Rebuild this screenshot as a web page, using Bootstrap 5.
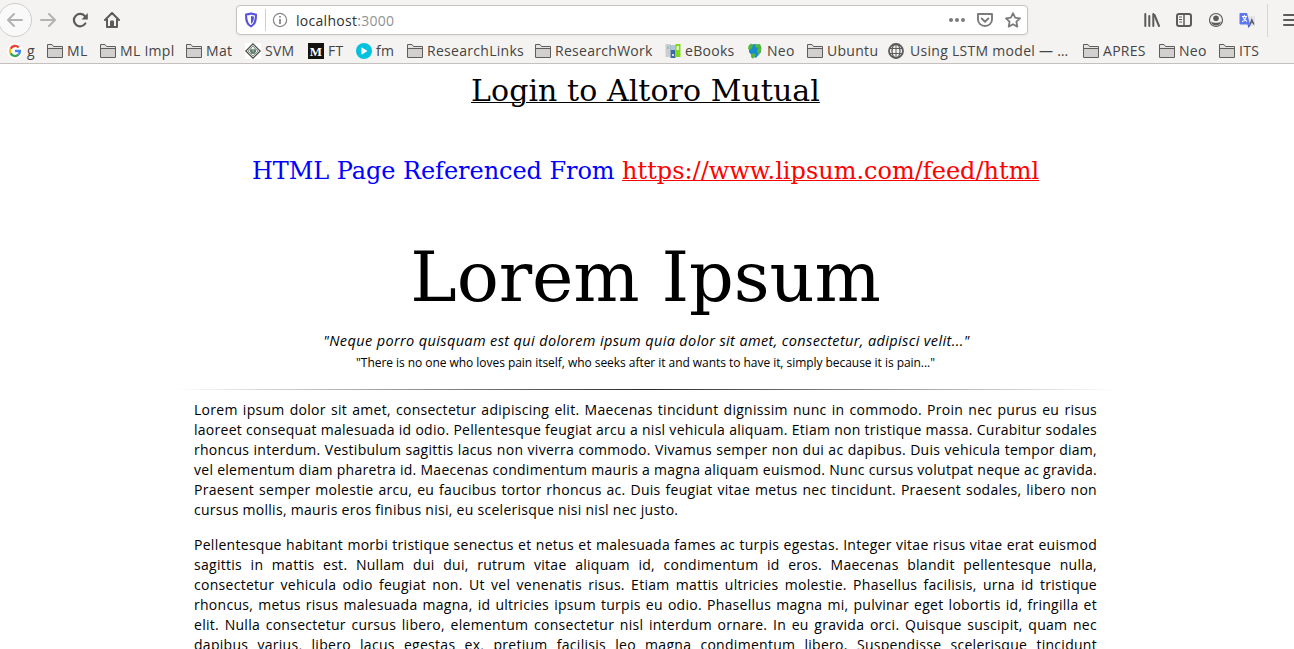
<!DOCTYPE html>
<html lang="en">
<head>
<meta charset="utf-8">
<title>Login to Altoro Mutual</title>
<meta name="viewport" content="width=device-width, initial-scale=1">
<link href="https://cdn.jsdelivr.net/npm/bootstrap@5.3.0/dist/css/bootstrap.min.css" rel="stylesheet">
<style>
body{height:649px;color:#000;background:#fff;font-family:"Open Sans",sans-serif;font-size:14px;line-height:20px}
svg{display:block;flex:none}
.chrome{height:64px;background:#f4f3f2;border-bottom:1px solid #c3c0bd;color:#4a4a4a;font-family:"Open Sans","Noto Sans",sans-serif}
.toolbar-row{height:40px}
.nav-icons{width:236px}
.back{width:34px;height:34px;margin-left:-2px;border:1px solid #cfcccb;border-radius:50%;background:#faf9f9}
.address{width:792px;height:30px;border:1px solid #c4c1be;border-radius:4px;background:#fff;box-shadow:0 1px 3px rgba(0,0,0,.05)}
.address .divider{width:1px;height:22px;background:#cfcfcf}
.address-text{font-size:14px;letter-spacing:.28px;color:#303030;padding-top:1px}
.address-text span{color:#919191}
.tool-divider{width:1px;height:33px;background:#d9d7d5}
.marks{display:grid;height:22px;padding-left:7px;grid-template-columns:40px 53px 86px 59px 63px 48px 51px 128px 130px 82px 60px 81px 195px 76px 60px 75px}
.marks a{display:flex;align-items:center;gap:4px;color:#444;text-decoration:none;white-space:nowrap;font-size:14px;line-height:20px;letter-spacing:.29px}
.marks span{margin-top:-1px}
.marks .wide-gap{gap:6px}
.serif{font-family:"DejaVu Serif",serif;font-weight:400;margin:0}
.login{font-size:30px;line-height:36px;padding-top:9px;letter-spacing:.06px;text-decoration:underline 1px}
.source{font-size:24px;line-height:28px;margin-top:48px;color:#00f;letter-spacing:-.06px}
.source a{color:red;text-decoration:underline 1px;letter-spacing:0}
.title{font-size:70px;line-height:90px;margin-top:47px;letter-spacing:-.15px}
.sheet{width:943px;margin-left:174px}
.quote{font-size:14.5px;font-style:italic;line-height:20px;margin-top:9px;padding-left:2px;letter-spacing:.37px}
.quote-en{font-size:12px;line-height:20px;margin-top:2px;letter-spacing:-.045px}
.rule{height:1px;margin:16px 0 10px;background:linear-gradient(to right,transparent,#2a2a2a 50%,transparent)}
.copy{padding:0 20px;letter-spacing:.28px}
.copy p{margin:0 0 15px}
.copy span{display:block;white-space:nowrap;text-align:justify;text-align-last:justify}
.copy .end{text-align-last:left}
</style>
</head>
<body class="overflow-hidden">
<svg width="0" height="0" class="position-absolute">
<symbol id="folder" viewBox="0 0 16 16"><path d="M.5 14.500V1.500h4.500l1.500 2h9v11z" fill="#e4e3e1" stroke="#5f5e5c"/><path d="M1 6h14v8H1z" fill="#d1d0ce"/><path d="M.5 5.500h15" stroke="#5f5e5c"/></symbol>
</svg>
<header class="chrome">
<div class="toolbar-row d-flex align-items-center">
<div class="nav-icons d-flex align-items-center">
<div class="back d-flex align-items-center justify-content-center"><svg width="16" height="16" fill="none" stroke="#b4b2b0" stroke-width="2" stroke-linecap="round" stroke-linejoin="round"><path d="M15 8H1.500M7 2L1 8l6 6"/></svg></div>
<svg class="ms-2" width="16" height="16" fill="none" stroke="#b4b2b0" stroke-width="2" stroke-linecap="round" stroke-linejoin="round"><path d="M1 8h13.500M9 2l6 6-6 6"/></svg>
<svg style="margin-left:16px" width="17" height="16" fill="none" stroke="#5c5b59" stroke-width="2.200" stroke-linecap="round"><path d="M13.300 11.500A6.200 6.200 0 1 1 13 4.300"/><path d="M15.800 1v6.500H9.500z" fill="#5c5b59" stroke="none"/></svg>
<svg style="margin-left:15px" width="16" height="16" fill="none" stroke="#5c5b59" stroke-width="2" stroke-linejoin="round" stroke-linecap="round"><path d="M1 8l7-7 7 7M3 7v8h10V7"/><path d="M6 14V9.500a1 1 0 0 1 1-1h2a1 1 0 0 1 1 1V14z" fill="#5c5b59" stroke="none"/></svg>
</div>
<div class="address d-flex align-items-center">
<svg style="margin-left:7px" width="14" height="16" fill="none"><path d="M7 1.500c2 .8 3.500.9 5 1 0 5.500-.5 9.500-5 12-4.500-2.500-5-6.500-5-12 1.500-.1 3-.2 5-1z" stroke="#5952dc" stroke-width="2" stroke-linejoin="round"/><path d="M7 4v8c2.300-1.500 2.900-4 3-7.400C8.800 4.500 8 4.300 7 4z" fill="#5952dc"/></svg>
<div class="divider" style="margin-left:7px"></div>
<svg style="margin-left:6px" width="16" height="16" fill="none"><circle cx="8" cy="8" r="6.600" stroke="#858585" stroke-width="1.200"/><path d="M8 7v5M8 4v1.600" stroke="#777" stroke-width="1.600"/></svg>
<div class="address-text" style="margin-left:8px">localhost<span>:3000</span></div>
<svg class="ms-auto" width="18" height="16" fill="#7b7b7b"><circle cx="3" cy="8" r="2"/><circle cx="9" cy="8" r="2"/><circle cx="15" cy="8" r="2"/></svg>
<svg style="margin-left:11px" width="16" height="16" fill="none" stroke="#7b7b7b" stroke-width="1.900" stroke-linecap="round" stroke-linejoin="round"><path d="M1 2h14v5.500a7 6.500 0 0 1-14 0z"/><path d="M4.700 6.500L8 9.700l3.300-3.200"/></svg>
<svg style="margin:0 6px 0 12px" width="16" height="16" fill="none" stroke="#7b7b7b" stroke-width="1.800" stroke-linejoin="round"><path d="M8 1.200l2.100 4.500 4.900.6-3.600 3.400.9 4.900L8 12.200l-4.300 2.400.9-4.900L1 6.300l4.900-.6z"/></svg>
</div>
<svg style="margin-left:116px" width="16" height="16" stroke="#5c5b59" stroke-width="2" stroke-linecap="round"><path d="M2 2v12M6 4v10M10 2v12" transform="translate(-.7 0)"/><path d="M10.500 3l4.500 11"/></svg>
<svg style="margin-left:16px" width="16" height="16" fill="none" stroke="#5c5b59"><rect x="1" y="2" width="14" height="12" rx="2" stroke-width="2"/><path d="M8 2v12" stroke-width="1.500"/><path d="M3 5h3M3 7.500h3M3.500 10H6"/></svg>
<svg style="margin-left:16px" width="16" height="16"><circle cx="8" cy="8" r="6.500" fill="none" stroke="#5c5b59" stroke-width="1.200"/><circle cx="8" cy="6.300" r="2.800" fill="#5c5b59"/><path d="M3 9.200c1.700 2 8.300 2 10 0-.6 3-2.500 4.300-5 4.300S3.600 12.200 3 9.200z" fill="#5c5b59"/></svg>
<svg style="margin-left:15px" width="17" height="17"><path d="M8 4h8v10H8z" fill="#e1e3e6"/><path d="M1.500 1H8l3 11.500H1.500A1 1 0 0 1 .5 11.500V2a1 1 0 0 1 1-1z" fill="#5b78f1"/><path d="M8.500 12.500H12L9.500 16z" fill="#3f5bd8"/><path d="M3 4.500h5M5.500 3v1.500M4 5c1 2.500 2 3.500 4 4.500M7 5C6.500 7.500 5 9 3 9.700" fill="none" stroke="#fff" stroke-width="1.100"/><path d="M11 12.500l1.800-5 2.200 5M11.800 10.800h2.200" fill="none" stroke="#4c5260" stroke-width="1.100"/></svg>
<div class="tool-divider" style="margin-left:11px"></div>
<svg style="margin-left:15px" width="11" height="16" stroke="#5c5b59" stroke-width="2" stroke-linecap="round"><path d="M1 3h13M1 8h13M1 13h13"/></svg>
</div>
<nav class="marks">
<a href="#"><svg width="16" height="16"><circle cx="8" cy="8" r="8" fill="#fff"/><g fill="none" stroke-width="2.300"><path d="M11.700 4.500A5 5 0 0 0 3.600 5.700" stroke="#ea4335"/><path d="M3.600 5.700a5 5 0 0 0 0 4.700" stroke="#fbbc05"/><path d="M3.600 10.400a5 5 0 0 0 7.800 1.300" stroke="#34a853"/><path d="M11.400 11.700A5 5 0 0 0 13 8H8" stroke="#4285f4"/></g></svg><span>g</span></a>
<a href="#"><svg width="16" height="16"><use href="#folder"/></svg><span>ML</span></a>
<a href="#"><svg width="16" height="16"><use href="#folder"/></svg><span>ML Impl</span></a>
<a href="#"><svg width="16" height="16"><use href="#folder"/></svg><span>Mat</span></a>
<a href="#"><svg width="16" height="16"><path fill="#fff" d="M0 0h16v16H0z"/><path d="M8 .8L15.200 8 8 15.200.8 8z" fill="#f2f4f2" stroke="#454b47" stroke-width="1.200"/><path d="M8 3l5 5-5 5-5-5z" fill="none" stroke="#777" stroke-width=".8"/><path d="M4.500 6.500L7 5.500l1 1 1-1 2.500 1-.8 3L8 11l-2.700-1.500z" fill="#7fa08c"/><path d="M5 8h2m2 0h2M6 10h4" stroke="#3f5a4a"/></svg><span>SVM</span></a>
<a href="#"><svg width="16" height="16"><path d="M0 0h16v16H0z" fill="#12130f"/><text x="8" y="12.500" text-anchor="middle" font-family="Liberation Serif" font-weight="700" font-size="13" letter-spacing="0" fill="#fff">M</text></svg><span>FT</span></a>
<a href="#"><svg width="16" height="16"><circle cx="8" cy="8" r="8" fill="#00c1de"/><path d="M5.500 4.300l6 3.700-6 3.700z" fill="#fff"/></svg><span>fm</span></a>
<a href="#"><svg width="16" height="16"><use href="#folder"/></svg><span>ResearchLinks</span></a>
<a href="#"><svg width="16" height="16"><use href="#folder"/></svg><span>ResearchWork</span></a>
<a href="#"><svg width="16" height="16"><path d="M.5 1h5v13h-5z" fill="#c9cecf"/><path d="M5.500 2h5v13h-5z" fill="#3e68a8"/><path d="M5.500 2h5v5h-5z" fill="#b2c5dc"/><path d="M10.500 1h5v13h-5z" fill="#7edc16"/><path d="M11.500 3H14v4h-2.500z" fill="#dcf6bd"/><path d="M2 3h2v3H2z" fill="#9dc59c"/><circle cx="8" cy="12" r="1" fill="#fff"/></svg><span>eBooks</span></a>
<a href="#"><svg width="16" height="16"><path d="M2 2l6-1 6 2v6l-5 6-4-2-3-4z" fill="#178bd0"/><path d="M1.500 3L4 .5 6 2 5 5 3 7 1 6zM8 1.500l5-.5 1.500 4-1 5-2.500 1-1-3 1-3-3-1zM4 11l2.500-1 2.500 2-3 3.800-2-1.800z" fill="#51b83c"/></svg><span>Neo</span></a>
<a href="#"><svg width="16" height="16"><use href="#folder"/></svg><span>Ubuntu</span></a>
<a href="#" class="wide-gap"><svg width="16" height="16" fill="none" stroke="#5c5b59" stroke-width="1.300"><circle cx="8" cy="8" r="7" stroke-width="1.800"/><ellipse cx="8" cy="8" rx="4" ry="7"/><path d="M8 1v14M1.500 5.500h13M1.500 10.500h13" stroke-width="1"/></svg><span>Using LSTM model — …</span></a>
<a href="#"><svg width="16" height="16"><use href="#folder"/></svg><span>APRES</span></a>
<a href="#"><svg width="16" height="16"><use href="#folder"/></svg><span>Neo</span></a>
<a href="#"><svg width="16" height="16"><use href="#folder"/></svg><span>ITS</span></a>
</nav>
</header>
<main>
<div class="sheet text-center">
<h2 class="serif login">Login to Altoro Mutual</h2>
<h3 class="serif source">HTML Page Referenced From <a href="#">https://www.lipsum.com/feed/html</a></h3>
<h1 class="serif title">Lorem Ipsum</h1>
<div class="quote">"Neque porro quisquam est qui dolorem ipsum quia dolor sit amet, consectetur, adipisci velit..."</div>
<div class="quote-en">"There is no one who loves pain itself, who seeks after it and wants to have it, simply because it is pain..."</div>
<div class="rule"></div>
<div class="copy">
<p>
<span>Lorem ipsum dolor sit amet, consectetur adipiscing elit. Maecenas tincidunt dignissim nunc in commodo. Proin nec purus eu risus</span>
<span>laoreet consequat malesuada id odio. Pellentesque feugiat arcu a nisl vehicula aliquam. Etiam non tristique massa. Curabitur sodales</span>
<span>rhoncus interdum. Vestibulum sagittis lacus non viverra commodo. Vivamus semper non dui ac dapibus. Duis vehicula tempor diam,</span>
<span>vel elementum diam pharetra id. Maecenas condimentum mauris a magna aliquam euismod. Nunc cursus volutpat neque ac gravida.</span>
<span>Praesent semper molestie arcu, eu faucibus tortor rhoncus ac. Duis feugiat vitae metus nec tincidunt. Praesent sodales, libero non</span>
<span class="end">cursus mollis, mauris eros finibus nisi, eu scelerisque nisi nisl nec justo.</span>
</p>
<p>
<span>Pellentesque habitant morbi tristique senectus et netus et malesuada fames ac turpis egestas. Integer vitae risus vitae erat euismod</span>
<span>sagittis in mattis est. Nullam dui dui, rutrum vitae aliquam id, condimentum id eros. Maecenas blandit pellentesque nulla,</span>
<span>consectetur vehicula odio feugiat non. Ut vel venenatis risus. Etiam mattis ultricies molestie. Phasellus facilisis, urna id tristique</span>
<span>rhoncus, metus risus malesuada magna, id ultricies ipsum turpis eu odio. Phasellus magna mi, pulvinar eget lobortis id, fringilla et</span>
<span>elit. Nulla consectetur cursus libero, elementum consectetur nisl interdum ornare. In eu gravida orci. Quisque suscipit, quam nec</span>
<span>dapibus varius, libero lacus egestas ex, pretium facilisis leo magna condimentum libero. Suspendisse scelerisque tincidunt</span>
</p>
</div>
</div>
</main>
<script src="https://cdn.jsdelivr.net/npm/bootstrap@5.3.0/dist/js/bootstrap.bundle.min.js"></script>
</body>
</html>
